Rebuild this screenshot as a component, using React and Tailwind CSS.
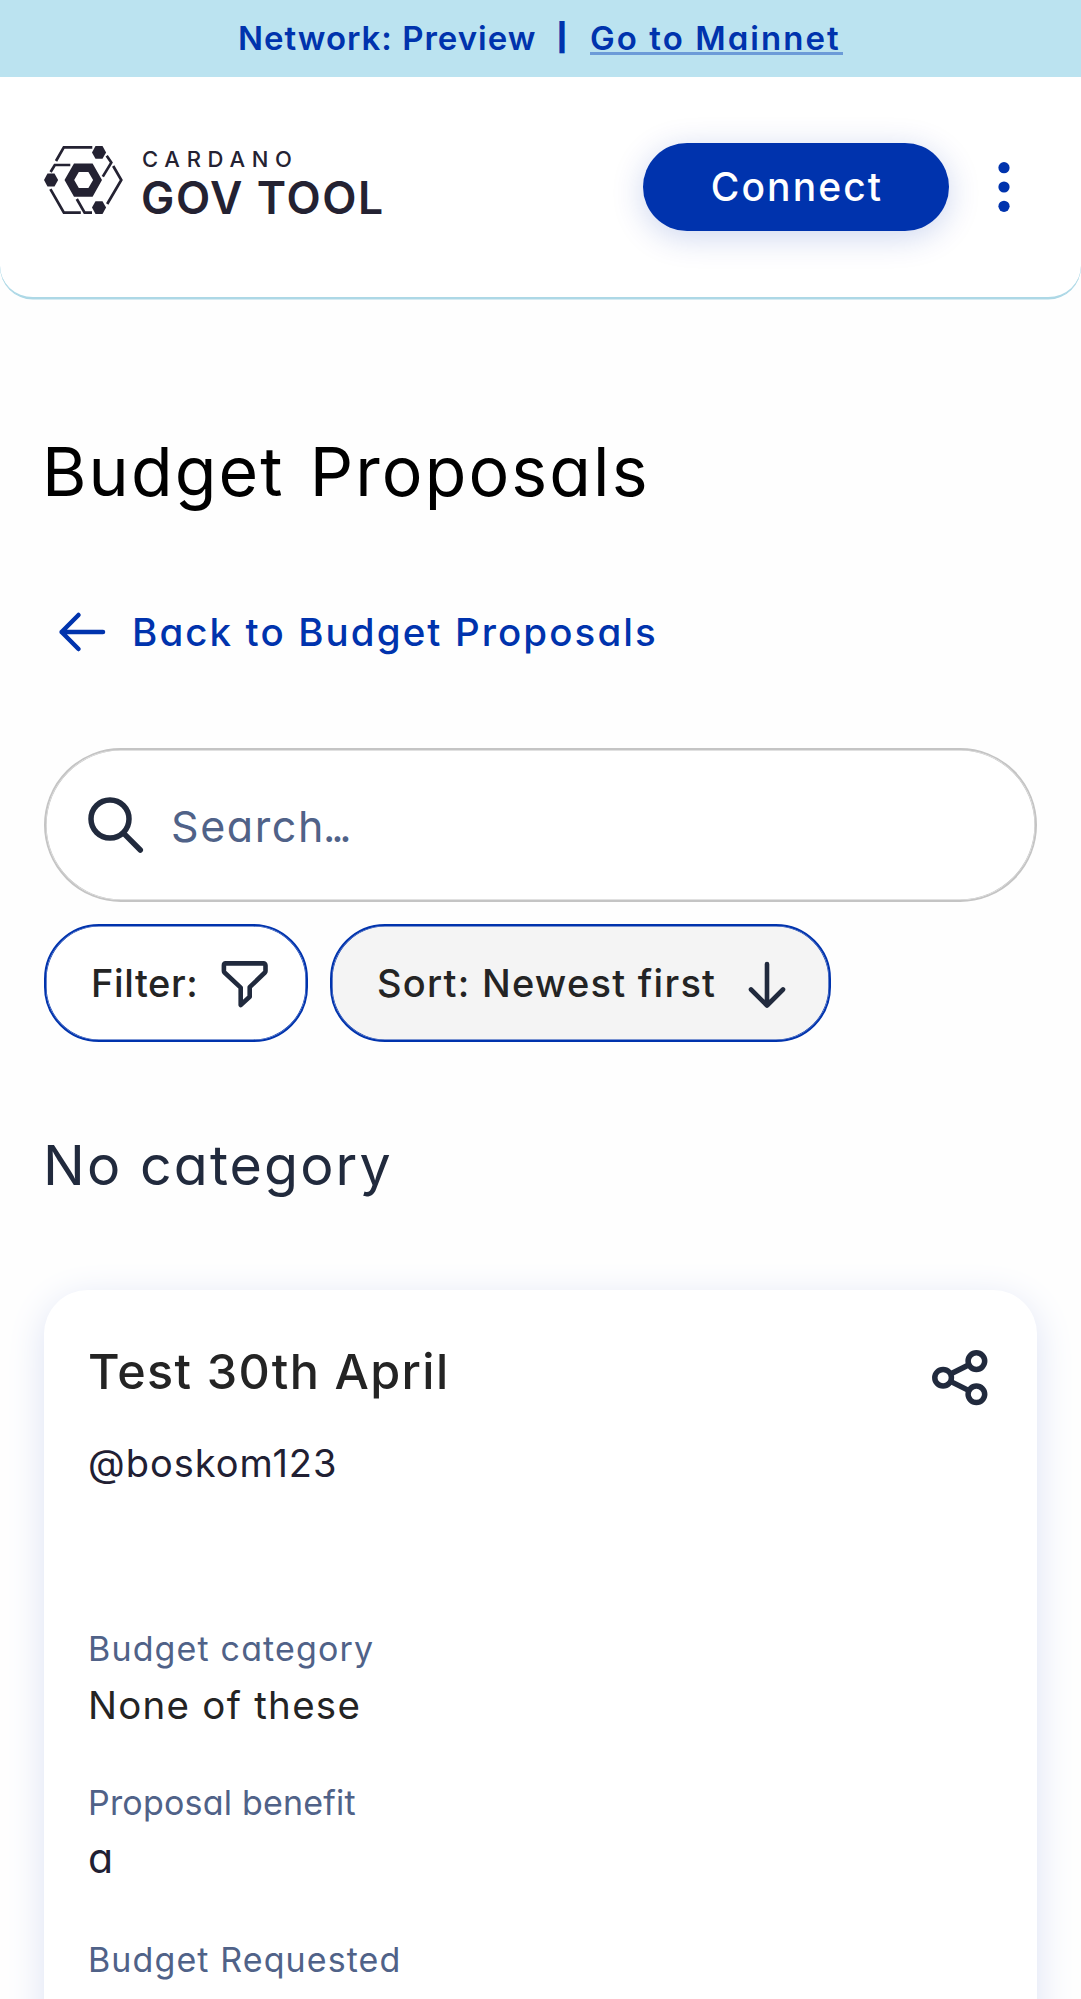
function Logo() {
  return (
    <svg width="80" height="70" viewBox="0 0 80 70" className="shrink-0" fill="#242232">
      <path
        fillRule="evenodd"
        d="M20.5 34 30 17.5h18.6L58 34l-9.4 16.8H30ZM30.2 34l4.6 8h9.6l4.7-8-4.7-7.9h-9.6Z"
      />
      <path d="M0 34l3.5-6.4h7L14.1 34l-3.6 6.4h-7Z" />
      <path d="M48 6.4 51.5 0h7L62.1 6.4l-3.6 6.4h-7Z" />
      <path d="M48 61.6l3.5-6.4h7l3.6 6.4-3.6 6.4h-7Z" />
      <g fill="none" stroke="#242232" strokeWidth="2.7">
        <path d="M48.3 1.4H19.8L12 15" />
        <path d="M26.3 19H10.8L6.6 26" />
        <path d="M6.4 43.2 19.9 66.6H36.8" />
        <path d="M32.8 53l7.8 13.6H48" />
        <path d="M62.7 9.8 67.3 16.6 58.8 30.6" />
        <path d="M69.2 20 77.3 34 63.2 58" />
      </g>
    </svg>
  );
}

function SearchIcon() {
  return (
    <svg width="58" height="58" viewBox="0 0 58 58" fill="none" stroke="#212a3d" strokeWidth="5.5" strokeLinecap="round" className="shrink-0">
      <circle cx="24" cy="23" r="19" />
      <path d="M38 37.6 54.3 54" />
    </svg>
  );
}

function FunnelIcon() {
  return (
    <svg width="50" height="50" viewBox="0 0 50 50" fill="none" stroke="#212a3d" strokeWidth="4.6" strokeLinejoin="round" className="mt-[4px] shrink-0">
      <path d="M5.8 3.4H43.5a2 2 0 0 1 2 2V11a2 2 0 0 1-.6 1.5L29.7 27.2V36.8L20.7 45V27.6L4.5 12.5A2 2 0 0 1 3.9 11V5.4a2 2 0 0 1 1.9-2Z" />
    </svg>
  );
}

function ArrowDownIcon() {
  return (
    <svg width="40" height="48" viewBox="0 0 40 48" fill="none" stroke="#212a3d" strokeWidth="4.6" strokeLinecap="round" strokeLinejoin="round" className="mt-[3px] shrink-0">
      <path d="M20 3v41.5M4 28.5l16 16 16-16" />
    </svg>
  );
}

function ArrowLeftIcon() {
  return (
    <svg width="50" height="42" viewBox="0 0 50 42" fill="none" stroke="#0033ad" strokeWidth="4.5" strokeLinecap="round" strokeLinejoin="round" className="shrink-0">
      <path d="M45 21H3.6M20.5 4 3.6 21l16.9 17" />
    </svg>
  );
}

function ShareIcon() {
  return (
    <svg width="56" height="56" viewBox="0 0 56 56" fill="none" stroke="#212a3d" strokeWidth="5.5" className="shrink-0">
      <circle cx="11.1" cy="27.7" r="8.3" />
      <circle cx="44.4" cy="11.1" r="8.3" />
      <circle cx="44.4" cy="44.3" r="8.3" />
      <path d="M18.5 24 37 14.8M18.5 31.4 37 40.6" />
    </svg>
  );
}

function Field({ label, children, className }) {
  return (
    <div className={className}>
      <div className="text-[34px] leading-[48px] text-[#506288]">{label}</div>
      {children}
    </div>
  );
}

export default function App() {
  return (
    <div className="h-[1999px] w-[1081px] overflow-hidden whitespace-nowrap bg-[#fefefe] font-['Inter',sans-serif] [font-feature-settings:'cv11']">
      <div className="flex h-[77px] bg-[#bbe3f0] pl-[238px] text-[33px] font-semibold leading-[76px] text-[#0033ad]">
        <span className="w-[317px] tracking-[0.98px]">Network: Preview</span>
        <span className="w-[14px] text-center text-[27px] font-black leading-[75px]">|</span>
        <a className="mt-[18px] ml-[21px] h-[37px] w-[253px] border-b-[3px] border-[#6c9bd8] leading-[40px] tracking-[2.05px]">Go to Mainnet</a>
      </div>

      <header className="flex h-[222px] items-start rounded-b-[33px] border-b-2 border-[#add8e6] bg-white pl-[44px] shadow-[0_0.6px_0_#add8e6]">
        <div className="flex w-[599px] pt-[69px]">
          <Logo />
          <div className="pt-[1px] pl-[18px] text-[#242232]">
            <div className="text-[22px] font-medium leading-[24px] tracking-[6.7px]">CARDANO</div>
            <div className="mt-[2px] -ml-[1px] text-[44.5px] font-semibold leading-[50px] tracking-[1.6px]">GOV TOOL</div>
          </div>
        </div>
        <button className="mt-[66px] h-[88px] w-[306px] rounded-full bg-[#0033ad] pl-[2px] text-[39px] font-medium leading-[88px] tracking-[2.1px] text-white shadow-[0_6px_33px_rgba(0,51,173,0.2)]">
          Connect
        </button>
        <svg width="12" height="52" viewBox="0 0 12 52" fill="#0033ad" className="mt-[84px] ml-[49px]">
          <circle cx="6" cy="6.7" r="5.6" />
          <circle cx="6" cy="26" r="5.6" />
          <circle cx="6" cy="45.3" r="5.6" />
        </svg>
      </header>

      <main className="px-[44px]">
        <h1 className="mt-[133px] -ml-[2px] text-[68px] leading-[78px] tracking-[2.1px] [word-spacing:4px] text-black">Budget Proposals</h1>

        <a className="mt-[94px] flex h-[56px] items-center pl-[14px] text-[38.5px] font-medium leading-[56px] tracking-[2.1px] text-[#0033ad]">
          <ArrowLeftIcon />
          <span className="ml-[24px]">Back to Budget Proposals</span>
        </a>

        <div className="mt-[88px] flex h-[154px] items-center rounded-[77px] border-2 border-[#c4c4c4] bg-white pl-[40px] shadow-[inset_0_0_0_0.6px_#c4c4c4]">
          <SearchIcon />
          <span className="mt-[2px] ml-[27px] text-[43px] tracking-[1.6px] text-[#506288]">
            Search<span className="-ml-[2px] tracking-[-4.3px]">...</span>
          </span>
        </div>

        <div className="mt-[22px] flex gap-[22px] text-[38px] font-medium text-[#242424]">
          <button className="flex h-[118px] w-[264px] items-center rounded-[55px] border-2 border-[#0033ad] bg-white pl-[45px] shadow-[inset_0_0_0_0.6px_#0033ad]">
            <span className="w-[129px] text-left leading-[54px] tracking-[0.6px]">Filter:</span>
            <FunnelIcon />
          </button>
          <button className="flex h-[118px] w-[501px] items-center rounded-[55px] border-2 border-[#0033ad] bg-[#f4f4f4] pl-[45px] shadow-[inset_0_0_0_0.6px_#0033ad]">
            <span className="w-[370px] text-left leading-[54px] tracking-[1.25px]">Sort: Newest first</span>
            <ArrowDownIcon />
          </button>
        </div>

        <h2 className="mt-[91px] -ml-[1px] text-[55.5px] leading-[64px] tracking-[2.1px] text-[#212a3d]">No category</h2>

        <article className="mt-[93px] h-[1000px] rounded-[44px] bg-white pt-[54px] pl-[44px] shadow-[0_9px_38px_#dde3f5]">
          <div className="flex h-[56px] items-start">
            <h3 className="w-[844px] text-[48.5px] font-medium leading-[55px] tracking-[1.35px] text-[#242424]">Test 30th April</h3>
            <div className="pt-[6px]">
              <ShareIcon />
            </div>
          </div>
          <div className="mt-[39px] text-[38px] leading-[48px] tracking-[1px] text-[#212033]">@boskom123</div>

          <Field label={<span className="tracking-[1.15px]">Budget category</span>} className="mt-[138px]">
            <div className="mt-[8px] text-[38.5px] leading-[48px] tracking-[1.25px] text-[#242424]">None of these</div>
          </Field>
          <Field label={<span className="tracking-[0.2px]">Proposal benefit</span>} className="mt-[50px]">
            <div className="mt-[8px] text-[41px] leading-[46px] text-[#212033]">a</div>
          </Field>
          <Field label={<span className="tracking-[1.1px]">Budget Requested</span>} className="mt-[55px]" />
        </article>
      </main>
    </div>
  );
}
